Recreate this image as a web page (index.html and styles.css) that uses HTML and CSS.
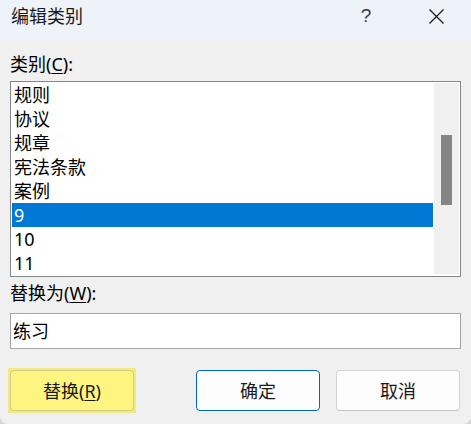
FILE: index.html
```html
<!DOCTYPE html>
<html lang="zh-CN">
<head>
<meta charset="utf-8">
<title>编辑类别</title>
<link rel="stylesheet" href="styles.css">
</head>
<body>
<div class="dialog">
  <div class="titlebar">
    <div class="title">编辑类别</div>
    <div class="help">?</div>
    <div class="close">
      <svg width="15" height="15" viewBox="0 0 15 15"><path d="M0.5 0.5 L14.5 14.5 M14.5 0.5 L0.5 14.5" stroke="#1b1b1b" stroke-width="1.25" fill="none"/></svg>
    </div>
  </div>
  <div class="content">
    <div class="label">类别(<u>C</u>):</div>
    <div class="listbox">
      <div class="rows">
        <div class="row">规则</div>
        <div class="row">协议</div>
        <div class="row">规章</div>
        <div class="row">宪法条款</div>
        <div class="row">案例</div>
        <div class="row selected">9</div>
        <div class="row">10</div>
        <div class="row">11</div>
      </div>
      <div class="scrollbar"><div class="thumb"></div></div>
    </div>
    <div class="label label-second">替换为(<u>W</u>):</div>
    <div class="input">练习</div>
    <div class="buttons">
      <div class="highlight"><div class="btn btn-yellow">替换(<u>R</u>)</div></div>
      <div class="btn btn-default">确定</div>
      <div class="btn btn-plain">取消</div>
    </div>
  </div>
</div>
</body>
</html>
```

FILE: styles.css
```css
html, body {
  margin: 0;
  padding: 0;
}
body {
  width: 471px;
  height: 424px;
  background: #d6d6d6;
  font-family: "Noto Sans", "Noto Sans CJK SC", sans-serif;
  font-size: 18px;
  color: #000;
  overflow: hidden;
}
.dialog {
  width: 471px;
  height: 424px;
  background: #f0f0f0;
  border-radius: 0 0 8px 8px;
  display: flex;
  flex-direction: column;
  overflow: hidden;
}
.titlebar {
  height: 39px;
  flex: none;
  background: #eef2f9;
  display: flex;
  align-items: flex-start;
  padding: 4px 0 0 11px;
  box-sizing: border-box;
}
.title {
  flex: 1;
  line-height: 24px;
  color: #1a1a1a;
}
.help {
  width: 20px;
  text-align: center;
  line-height: 24px;
  font-size: 19px;
  font-family: "Liberation Sans", sans-serif;
  color: #3a3a3a;
}
.close {
  margin-left: 53px;
  margin-right: 27px;
  margin-top: 5px;
  width: 15px;
  height: 15px;
  display: flex;
}
.content {
  padding: 13px 10px 0 10px;
  display: flex;
  flex-direction: column;
}
.label {
  line-height: 24px;
  height: 24px;
  color: #000;
}
.label u, .btn u {
  text-underline-offset: 2px;
  text-decoration-thickness: 1px;
}
.listbox {
  margin-top: 5px;
  height: 196px;
  box-sizing: border-box;
  border: 1px solid #82878c;
  background: #fff;
  padding: 1px;
  display: grid;
  grid-template-columns: 1fr 25px;
  column-gap: 1px;
}
.rows {
  display: flex;
  flex-direction: column;
  overflow: hidden;
}
.row {
  height: 24px;
  line-height: 24px;
  padding-left: 2px;
  white-space: nowrap;
}
.row.selected {
  background: #0078d4;
  color: #fff;
}
.scrollbar {
  background: #f0f0f0;
  display: flex;
  flex-direction: column;
  align-items: center;
  padding-top: 52px;
  margin-bottom: 1px;
}
.thumb {
  width: 11px;
  height: 70px;
  background: #858585;
}
.label-second {
  margin-top: 4px;
}
.input {
  margin-top: 8px;
  height: 36px;
  box-sizing: border-box;
  border: 1px solid #a6a6a6;
  background: #fff;
  padding-left: 2px;
  line-height: 34px;
}
.buttons {
  margin-top: 19px;
  display: flex;
  align-items: flex-start;
}
.highlight {
  margin-left: -2px;
  padding: 2px;
  background: #f3e97c;
}
.btn {
  width: 124px;
  height: 41px;
  box-sizing: border-box;
  border-radius: 4px;
  display: flex;
  align-items: center;
  justify-content: center;
  line-height: 24px;
  color: #1a1a1a;
}
.btn-yellow {
  background: #fdf57f;
  border: 1px solid #cfc98a;
}
.btn-default {
  margin-left: 60px;
  margin-top: 2px;
  background: #fdfdfd;
  border: 1px solid #0067c0;
}
.btn-plain {
  margin-left: 16px;
  margin-top: 2px;
  background: #fdfdfd;
  border: 1px solid #d3d3d3;
  border-bottom-color: #c2c2c2;
}
```
